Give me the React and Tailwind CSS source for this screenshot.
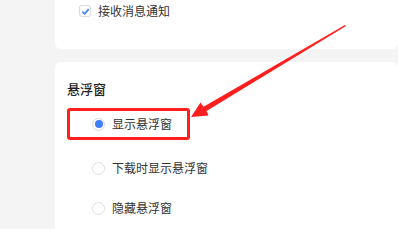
const Radio = ({ checked }) => (
  <span
    className={`flex h-[13px] w-[13px] shrink-0 items-center justify-center rounded-full border ${
      checked ? "border-[#d6d9de]" : "border-[#dcdfe3]"
    } bg-white`}
  >
    {checked && <span className="h-[8px] w-[8px] rounded-full bg-[#3f7ef6]" />}
  </span>
);

const App = () => {
  return (
    <div
      className="relative h-[229px] w-[398px] overflow-hidden bg-[#f4f4f4] pl-[55px] text-[#333]"
      style={{ fontFamily: '"Noto Sans CJK SC", "Noto Sans", sans-serif' }}
    >
      {/* message card */}
      <div className="h-[49px] rounded-b-[6px] bg-white pl-[24px] pt-[4px]">
        <div className="flex items-center gap-[7px]">
          <span className="flex h-[12px] w-[12px] items-center justify-center rounded-[3px] border border-[#d8dbe0] bg-white">
            <svg width="9" height="9" viewBox="0 0 10 10">
              <path d="M1.5 5.2 L4 7.6 L8.6 2.4" fill="none" stroke="#3f7ef6" strokeWidth="1.8" />
            </svg>
          </span>
          <span className="text-[12px] leading-[14px]">接收消息通知</span>
        </div>
      </div>

      {/* floating window card */}
      <div className="mt-[13px] h-[200px] rounded-t-[6px] bg-white pl-[12px] pt-[18px]">
        <div className="text-[13px] font-medium leading-[18px] text-[#222]">悬浮窗</div>
        <div className="mt-[10px] flex h-[32px] w-[123px] items-center gap-[7px] rounded-[3px] border-[3px] border-[#ff1f1f] pl-[22px]">
          <Radio checked />
          <span className="text-[12px] leading-[14px]">显示悬浮窗</span>
        </div>
        <div className="mt-[20px] flex h-[16px] items-center gap-[7px] pl-[25px]">
          <Radio />
          <span className="text-[12px] leading-[14px]">下载时显示悬浮窗</span>
        </div>
        <div className="mt-[24px] flex h-[16px] items-center gap-[7px] pl-[25px]">
          <Radio />
          <span className="text-[12px] leading-[14px]">隐藏悬浮窗</span>
        </div>
      </div>

      {/* annotation arrow */}
      <svg className="absolute left-0 top-0" width="398" height="229" viewBox="0 0 398 229">
        <polygon
          points="346,26 206.5,111 208.5,115.5 191,117 200.5,102.5 203.5,106.8 345,25"
          fill="#ff1f1f"
        />
      </svg>
    </div>
  );
};

export default App;
